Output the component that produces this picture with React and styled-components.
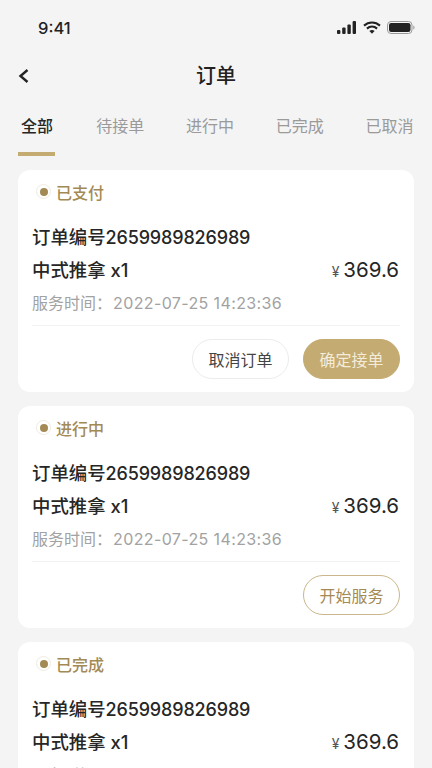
import React from "react";
import styled, { createGlobalStyle } from "styled-components";

const Global = createGlobalStyle`
  html, body { margin: 0; padding: 0; background: #f4f4f4; }
  body { font-family: Inter, "Noto Sans CJK SC", sans-serif; }
  * { box-sizing: border-box; }
`;

const Page = styled.div`
  width: 432px;
  height: 768px;
  overflow: hidden;
  background: #f4f4f4;
  color: #262626;
`;

const StatusBar = styled.div`
  height: 56px;
  padding: 18px 17px 0 38px;
  display: flex;
  justify-content: space-between;
  align-items: flex-start;
`;

const Clock = styled.span`
  font-size: 16.5px;
  line-height: 21px;
  font-weight: 500;
  color: #222;
`;

const StatusIcons = styled.div`
  display: flex;
  align-items: center;
  gap: 6px;
  height: 18px;
`;

const Header = styled.div`
  height: 40px;
  position: relative;
  display: flex;
  align-items: center;
  justify-content: center;
`;

const Title = styled.h1`
  margin: 0;
  font-size: 20px;
  line-height: 40px;
  font-weight: 500;
  color: #222;
`;

const Back = styled.svg`
  position: absolute;
  left: 17px;
  top: 12px;
`;

const Tabs = styled.div`
  margin-top: 10px;
  height: 46px;
  padding-left: 21px;
  display: flex;
`;

const Tab = styled.div`
  position: relative;
  flex: none;
  width: ${(p) => (p.$active ? "54.5px" : "89.75px")};
  height: 38px;
  text-align: ${(p) => (p.$active ? "left" : "center")};
  font-size: 16px;
  line-height: 20px;
  padding-top: 10px;
  font-weight: ${(p) => (p.$active ? 500 : 400)};
  color: ${(p) => (p.$active ? "#262626" : "#9a9a9a")};
  ${(p) =>
    p.$active &&
    `&::after {
      content: "";
      position: absolute;
      left: -3px;
      bottom: -12px;
      width: 37px;
      height: 4px;
      background: #c4ab72;
    }`}
`;

const List = styled.div`
  margin-top: 18px;
  padding: 0 18px;
  display: flex;
  flex-direction: column;
  gap: 14px;
`;

const Card = styled.div`
  height: 222px;
  flex: none;
  background: #fff;
  border-radius: 12px;
  padding: 0 14px;
`;

const Status = styled.div`
  height: 43px;
  padding-left: 4px;
  display: flex;
  align-items: center;
  gap: 5px;
  font-size: 16px;
  font-weight: 500;
  color: #a38a55;
`;

const Ring = styled.span`
  width: 15px;
  height: 15px;
  border-radius: 50%;
  border: 1px solid #f0ebdf;
  display: flex;
  align-items: center;
  justify-content: center;
  &::before {
    content: "";
    width: 8px;
    height: 8px;
    border-radius: 50%;
    background: #a38a55;
  }
`;

const Order = styled.div`
  margin-top: 8px;
  font-size: 18.4px;
  line-height: 32px;
  font-weight: 500;
  color: #262626;
`;

const Digits = styled.span`
  font-size: 18px;
  letter-spacing: -0.15px;
`;

const ItemRow = styled.div`
  padding-right: 1px;
  display: flex;
  justify-content: space-between;
  align-items: center;
  height: 30px;
  font-size: 18.4px;
  font-weight: 500;
`;

const Price = styled.div`
  display: flex;
  align-items: baseline;
  gap: 4px;
  font-size: 20.5px;
  font-weight: 400;
  color: #262626;
`;

const Yen = styled.span`
  font-size: 14px;
  color: #555;
`;

const Time = styled.div`
  margin-top: 4px;
  height: 30px;
  line-height: 30px;
  font-size: 16px;
  color: #a2a2a2;
`;

const Stamp = styled.span`
  margin-left: 1px;
  letter-spacing: 0.38px;
`;

const Divider = styled.div`
  margin-top: 7px;
  height: 1px;
  background: #f2f2f2;
`;

const Actions = styled.div`
  margin-top: 13px;
  display: flex;
  justify-content: flex-end;
  gap: 14px;
`;

const Button = styled.button`
  width: 97px;
  height: 40px;
  border-radius: 20px;
  padding: 0;
  font-family: inherit;
  font-size: 16px;
  background: ${(p) => (p.$variant === "solid" ? "#c4ab72" : "#fff")};
  color: ${(p) =>
    p.$variant === "solid" ? "#f3ecdb" : p.$variant === "gold" ? "#a38a55" : "#444"};
  border: 1px solid
    ${(p) =>
      p.$variant === "solid" ? "#c4ab72" : p.$variant === "gold" ? "#c9b68c" : "#ececec"};
`;

const tabs = ["全部", "待接单", "进行中", "已完成", "已取消"];

const orders = [
  {
    status: "已支付",
    actions: [
      { label: "取消订单", variant: "plain" },
      { label: "确定接单", variant: "solid" },
    ],
  },
  { status: "进行中", actions: [{ label: "开始服务", variant: "gold" }] },
  { status: "已完成", actions: [] },
];

export default function App() {
  return (
    <Page>
      <Global />
      <StatusBar>
        <Clock>9:41</Clock>
        <StatusIcons>
          <svg width="20" height="13" viewBox="0 0 20 13" fill="#222">
            <rect x="0" y="9" width="3.4" height="4" rx="1" />
            <rect x="5.2" y="6.5" width="3.4" height="6.5" rx="1" />
            <rect x="10.4" y="3.5" width="3.4" height="9.5" rx="1" />
            <rect x="15.6" y="0" width="3.4" height="13" rx="1" />
          </svg>
          <svg width="18" height="13" viewBox="0 0 18 13" fill="none" stroke="#222">
            <path d="M1 4.6C5.6 .5 12.4 .5 17 4.6" strokeWidth="2.1" />
            <path d="M3.9 7.6C6.9 5 11.1 5 14.1 7.6" strokeWidth="2.1" />
            <path d="M9 12.8 6.4 10c1.5-1.2 3.7-1.2 5.2 0z" fill="#222" stroke="none" />
          </svg>
          <svg width="28" height="13" viewBox="0 0 28 13" fill="none">
            <rect x=".5" y=".5" width="24.5" height="12" rx="3.5" stroke="#999" />
            <rect x="2" y="2" width="21.5" height="9" rx="2.2" fill="#222" />
            <path d="M26.2 4.4c1 .3 1.4 1.1 1.4 2.1s-.4 1.8-1.4 2.1z" fill="#aaa" />
          </svg>
        </StatusIcons>
      </StatusBar>
      <Header>
        <Back width="12" height="16" viewBox="0 0 12 16" fill="none" stroke="#222" strokeWidth="2.4">
          <path d="M10.5 2 3.5 8l7 6" />
        </Back>
        <Title>订单</Title>
      </Header>
      <Tabs>
        {tabs.map((t, i) => (
          <Tab key={t} $active={i === 0}>{t}</Tab>
        ))}
      </Tabs>
      <List>
        {orders.map((o) => (
          <Card key={o.status}>
            <Status>
              <Ring />
              {o.status}
            </Status>
            <Order>订单编号<Digits>2659989826989</Digits></Order>
            <ItemRow>
              <span>中式推拿 x1</span>
              <Price>
                <Yen>¥</Yen>
                369.6
              </Price>
            </ItemRow>
            <Time>
              服务时间：<Stamp>2022-07-25 14:23:36</Stamp>
            </Time>
            <Divider />
            <Actions>
              {o.actions.map((a) => (
                <Button key={a.label} $variant={a.variant}>{a.label}</Button>
              ))}
            </Actions>
          </Card>
        ))}
      </List>
    </Page>
  );
}
